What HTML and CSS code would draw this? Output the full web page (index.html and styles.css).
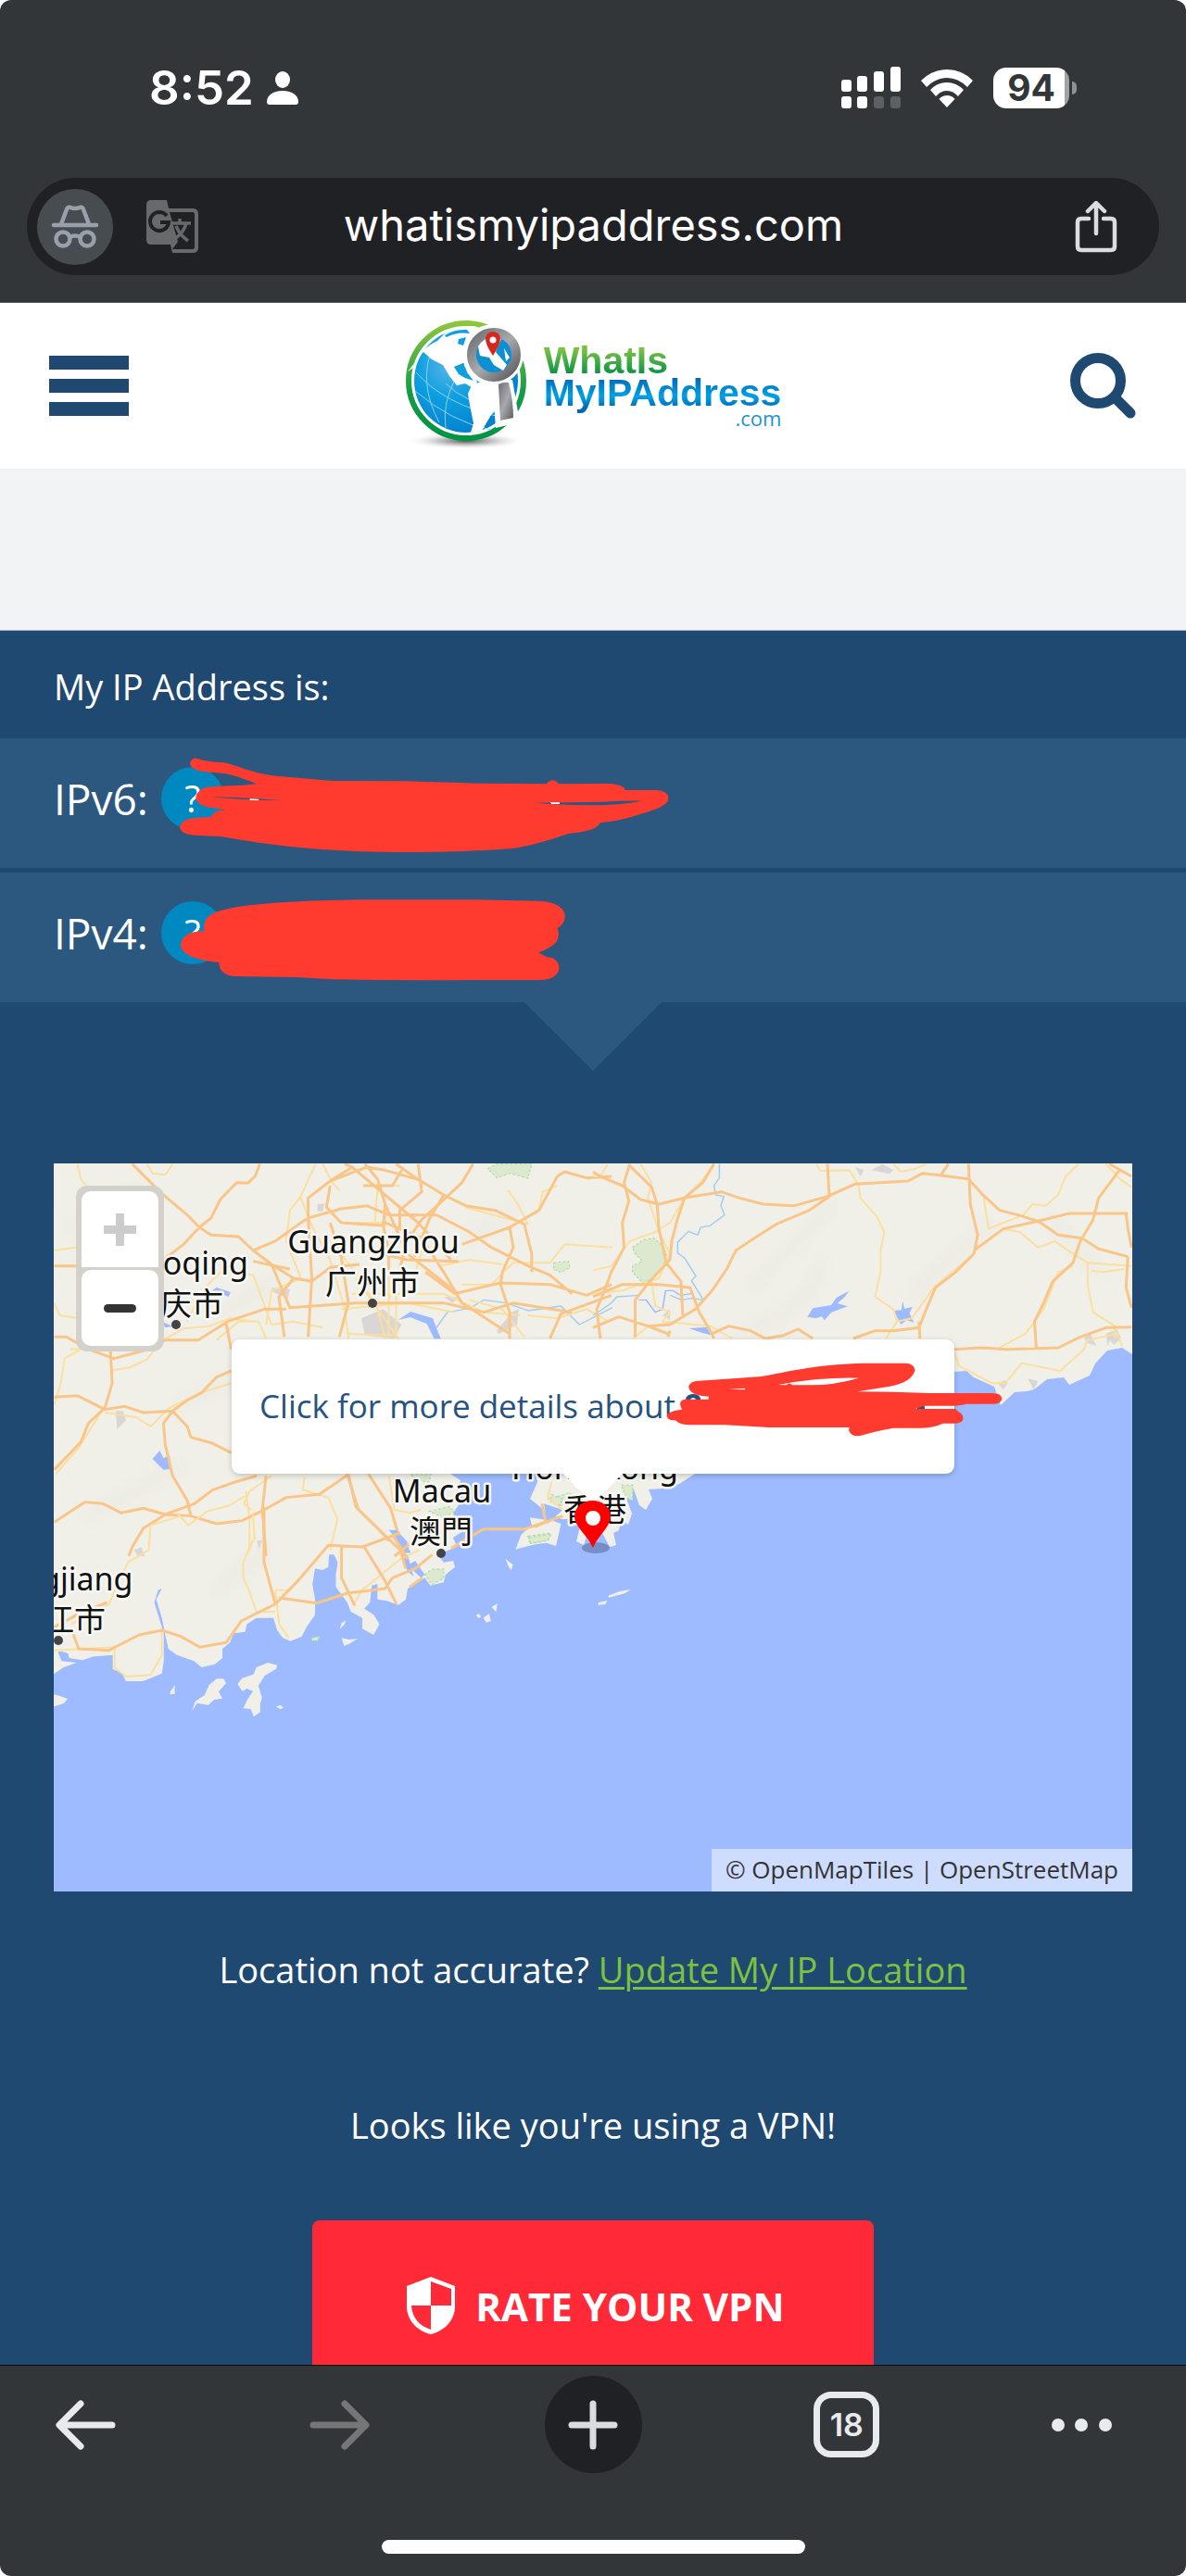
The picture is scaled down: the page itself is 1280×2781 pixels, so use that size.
FILE: index.html
```html
<!DOCTYPE html>
<html lang="en">
<head>
<meta charset="utf-8">
<meta name="viewport" content="width=device-width, initial-scale=1">
<title>What Is My IP Address</title>
<link rel="stylesheet" href="styles.css">
</head>
<body>
<div class="device">
  <div class="chrome-top">
    <div class="status">
      <div class="status-left">
        <span class="clock">8:52</span>
        <svg width="34" height="38" viewBox="0 0 34 38" fill="#fff" aria-hidden="true"><ellipse cx="17" cy="10" rx="8" ry="9"/><path d="M0 34C0 26 8 22 17 22s17 4 17 12q0 3-3 3H3q-3 0-3-3z"/></svg>
      </div>
      <div class="status-right">
        <svg width="64" height="46" viewBox="0 0 64 46" fill="#fff" aria-hidden="true"><rect y="14" width="11" height="13" rx="3"/><rect x="17" y="10" width="11" height="17" rx="3"/><rect x="35" y="5" width="11" height="22" rx="3"/><rect x="53" width="11" height="27" rx="3"/><rect y="32" width="11" height="13" rx="3"/><rect x="17" y="32" width="11" height="13" rx="3"/><g fill="#5d6062"><rect x="35" y="32" width="11" height="13" rx="3"/><rect x="53" y="32" width="11" height="13" rx="3"/></g></svg>
        <svg width="56" height="42" viewBox="0 0 56 42" fill="#fff" aria-hidden="true"><path d="M0 13Q12 1 28 1t28 12l-6 7Q40 10 28 10T6 20zM10 23q8-8 18-8t18 8l-6 7q-5-6-12-6t-12 6zM19.500 33q3-4 8.500-4t8.500 4L28 42z"/></svg>
        <div class="battery"><span class="battery-body">94</span><span class="battery-nub"></span></div>
      </div>
    </div>
    <div class="address">
      <button class="incognito" aria-label="Incognito"><svg width="52" height="48" viewBox="0 0 52 48" fill="none" stroke="#9aa0ab" stroke-width="4.500" stroke-linecap="round" stroke-linejoin="round" aria-hidden="true"><path d="M3 22h46M11 21l6-16q1-3 4-2 5 2 10 0 3-1 4 2l6 16"/><circle cx="13" cy="37" r="7.500"/><circle cx="39" cy="37" r="7.500"/><path d="M20 35q6-3 12 0"/></svg></button>
      <button class="translate" aria-label="Translate"><svg width="56" height="58" viewBox="0 0 56 58" aria-hidden="true"><path fill="#68696b" d="M5 0h17l2 9h26q6 0 6 6v36q0 6-6 6H28l-2-9H5q-5 0-5-5V5q0-5 5-5zM25 13l9 32-6 8h22q2 0 2-2V15q0-2-2-2z"/><path fill="none" stroke="#202124" stroke-width="4" d="M22 17a10 10 0 1 0 2 7h-9"/><path fill="none" stroke="#68696b" stroke-width="3.500" d="M28 25h20M36 20v5M43 25q-3 11-13 17M32 28q4 10 13 16"/></svg></button>
      <input class="url" type="text" value="whatismyipaddress.com" aria-label="Address">
      <button class="share" aria-label="Share"><svg width="46" height="56" viewBox="0 0 46 56" fill="none" stroke="#dadce0" stroke-width="4.500" stroke-linecap="round" stroke-linejoin="round" aria-hidden="true"><path d="M15 19H7q-4 0-4 4v26q0 4 4 4h32q4 0 4-4V23q0-4-4-4h-8M23 35V4M14 11l9-9 9 9"/></svg></button>
    </div>
  </div>

  <main class="page">
    <header class="site-header">
      <button class="menu" aria-label="Menu"><span></span><span></span><span></span></button>
      <a class="logo" href="#">
        <svg class="globe" width="144" height="146" viewBox="0 0 144 146" aria-hidden="true">
          <defs>
            <linearGradient id="ring" x2="0" y2="1"><stop stop-color="#8cc63f"/><stop offset=".6" stop-color="#169b48"/><stop offset="1" stop-color="#009444"/></linearGradient>
            <radialGradient id="sea" cx=".35" cy=".35" r=".8"><stop stop-color="#5cb5e8"/><stop offset=".4" stop-color="#0d9fe0"/><stop offset="1" stop-color="#0077c8"/></radialGradient>
            <linearGradient id="steel" x2="1" y2="1"><stop stop-color="#6d6e71"/><stop offset=".5" stop-color="#a7a9ac"/><stop offset="1" stop-color="#58595b"/></linearGradient>
            <radialGradient id="shade"><stop stop-color="#555"/><stop offset=".5" stop-color="#999" stop-opacity=".5"/><stop offset="1" stop-color="#fff" stop-opacity="0"/></radialGradient>
          </defs>
          <ellipse cx="66" cy="132" rx="64" ry="9" fill="url(#shade)"/>
          <circle cx="66" cy="67" r="62" fill="#fff" stroke="url(#ring)" stroke-width="6"/>
          <circle cx="66" cy="67" r="56" fill="url(#sea)"/>
          <path fill="none" stroke="#8fd0f2" stroke-width="1" d="M30 30Q14 70 37 112M56 62Q40 90 44 118M12 58q30 34 90 48M11 78q40 34 82 42M44 70q20 20 62 30"/>
          <path fill="#fff" d="M15 42q6-12 20-18l8-8q16-8 32-8l16 6-3 24-10 14-8 6 8 10-3 8-10-6-9 2-8-10-7-12-12-6-9-8-4 4-8 14-5 3zM72 72l10-4 20 0 6 12-1 10-14 14-10 17-12 2 3-10-4-20-2-12z"/>
          <path fill="#0d9fe0" d="M43 18q10-7 24-6l3 4q-14-2-25 4zM58 22l8-2-3 9-6-2zM53 52l12-5 2 11 7 9-9-3-7-4z"/>
          <path fill="#fff" d="M94 66h22l8 46-26 6z"/>
          <circle cx="95" cy="39" r="33" fill="#fff"/>
          <circle cx="96" cy="39" r="24" fill="#0d8fd4" stroke="url(#steel)" stroke-width="10"/>
          <path fill="#fff" d="M79 30q6-10 17-10l8 2-6 14 12 14-4 6-10-6-5-8-10-2zM107 32l6 10-4 4z"/>
          <path fill="url(#steel)" d="M101 71q5-3 11-2 5 20 5 38l-14 3z"/>
          <path fill="#d7261e" d="M95 40q-8-12-8-18a8 8 0 0 1 16 0q0 6-8 18z"/><circle cx="95" cy="23" r="3.500" fill="#fff"/>
        </svg>
        <span class="logo-text"><span class="logo-what">WhatIs</span><span class="logo-my">MyIPAddress</span><span class="logo-com">.com</span></span>
      </a>
      <button class="search" aria-label="Search"><svg width="72" height="72" viewBox="0 0 72 72" fill="none" stroke="#1f4971" stroke-linecap="round" aria-hidden="true"><circle cx="30" cy="30" r="24.500" stroke-width="11"/><path stroke-width="11" d="M50 50l15 15"/></svg></button>
    </header>
    <div class="ad-slot"></div>

    <section class="ip">
      <h1 class="ip-title">My IP Address is:</h1>
      <div class="ip-row">
        <span>IPv6:</span><button class="help" aria-label="About IPv6">?</button>
        <svg class="scribble" width="760" height="140" viewBox="0 0 760 140" aria-hidden="true"><g transform="scale(.4847 .3333) translate(0 -351)" fill="#ff3b30"><path d="M434 415Q460 428 500 430C540 445 560 465 620 474L740 489 900 490 1060 497 1217 499Q1231 474 1244 499L1360 498Q1390 502 1393 519L1465 519Q1490 525 1488 548C1485 575 1440 590 1400 608Q1370 620 1337 625C1325 652 1295 655 1265 660 1215 685 1180 700 1140 708Q1030 720 880 720 720 720 580 690L490 669 430 665Q400 660 401 638 402 612 440 608L470 606Q475 585 502 583L460 574Q436 562 436 542 440 510 475 507L540 503 572 499C545 485 520 468 495 464L450 459Q425 450 423 434 424 420 434 415z"/><path fill="#2c587f" d="M468 541Q540 542 630 553 550 552 468 541zM1190 560L1340 557Q1400 552 1430 554 1380 568 1310 568 1240 566 1190 560z"/><path fill="#fff" d="M556 547l20 1v4l-20-1zM1225 559h21v5h-18z"/></g></svg>
      </div>
      <div class="ip-row">
        <span>IPv4:</span><button class="help" aria-label="About IPv4">?</button>
        <svg class="scribble" width="760" height="140" viewBox="0 0 760 140" aria-hidden="true"><g transform="scale(.4847 .3333) translate(0 -786)" fill="#ff3b30"><path d="M485 912C540 885 680 876 820 874H1060L1200 878C1240 880 1260 905 1258 930Q1256 955 1241 966 1248 990 1238 1012 1228 1030 1199 1045L1218 1060Q1244 1062 1245 1098 1240 1134 1200 1134H1060Q900 1136 740 1132L660 1125 520 1122Q487 1115 488 1077C440 1070 405 1055 402 1020 405 985 430 975 455 976Q448 930 485 912z"/></g></svg>
      </div>
      <div class="pointer"></div>

      <div class="map">
        <svg class="map-canvas" viewBox="58 1256 1164 786" role="img" aria-label="Map of Hong Kong and Guangdong">
          <defs><filter id="soft"><feGaussianBlur stdDeviation="9"/></filter></defs>
          <rect x="58" y="1256" width="1164" height="786" fill="#9dbbfe"/>
          <g fill="#f1f0e8">
            <path d="M58 1256H1222V1462L1211 1455 1195 1458 1182 1472 1176 1485 1154 1495 1148 1487 1130 1489 1116 1500 1108 1502 1095 1503 1080 1517 1073 1497 1051 1487 1043 1480 1029 1481 1000 1540H58z"/>
            <path d="M570 1540H900L760 1585 750 1591 733 1602 715 1607 700 1608 704 1618 697 1630 690 1625 684 1608 674 1612 682 1634 678 1646 670 1640 668 1652 662 1655 665 1668 658 1670 650 1655 636 1650 630 1668 622 1664 628 1640 606 1640 592 1634 572 1618 580 1600z"/>
            <g transform="translate(40 1560) scale(.4082 .3333)"><path d="M44-120H1095V95L1120 115 1110 150 1120 185 1100 220 1105 240 1150 260 1100 300 1110 330 1060 355 1075 380 1100 375 1105 395 1080 420 1075 445 1040 455 1025 430 980 465 975 500 955 518 925 505 900 500 900 450 885 455 880 510 865 530 890 550 905 580 890 615 860 595 860 560 830 540 820 510 790 460 790 420 795 380 785 355 772 355 770 395 755 405 735 400 728 450 735 500 735 550 712 590 700 620 670 635 650 625 635 600 625 560 580 560 555 580 550 605 520 610 510 640 490 660 490 690 470 710 435 720 415 700 370 680 347 660 340 620 330 560 315 500 330 465 320 470 310 510 325 570 335 610 335 700 330 740 280 765 235 765 225 740 200 725 200 680 150 685 120 697 85 690 82 675 65 668 55 670 65 700 105 705 70 720 44 742z"/>
            <path d="M44 808l15 4 22 10-10 14-27 12zM410 862l8-32 25-20 12-33 20-20 18 0 7 14-20 28 10 22-22 4-15 17-30-6zM530 775l12-20 30-12 8-23 30-15 25 8-3 12-30 22-17 33 10 38-5 20 0 27-17 15-8-25-20-2 12-30 14-26-16-8-12 8zM352 800l12-22v28l-12 2zM632 848l10-6 10 8-8 6zM800 597l5-20 12-10-5 15zM805 625l20 5 22-2-20 15-15 8zM1160 552l8-6 6 10-6 5zM1180 560l15-14 5 24-12 5zM1202 525l15-12-3 28zM1238 368l20 20-4 18-8-14zM1485 510l22-6-4 12-20 2zM1510 488l30-14 30-6-15 12-43 14zM1265 338l15-48 28-30-5-25 60 10 22 10-5 30-8 42-25-10-30 5-35 10z"/></g>
          </g>
          <g filter="url(#soft)" fill="none" stroke="#e6e5de" stroke-width="11" opacity=".6"><path d="M70 1330l90-50M90 1640l110-60M560 1300l-60 40M780 1460l90-60 20-40M980 1400l90-80M900 1300l-90 90M1130 1310l60 70M270 1480l-80 40M230 1720l60-50M300 1380l-60 40"/></g>

          <!-- roads west of the estuary and around Guangzhou -->
          <g transform="translate(40 1240) scale(.3954 .3333)">
            <g fill="#dce9cf" stroke="#a5dba0" stroke-width="3" stroke-dasharray="7 6"><path d="M1230 65l25-15h95l-10 46-50-16-35 15zM1410 370l40-5 5 20-25 16-20-10zM1070 1175l55-15 15 15-30 20zM1020 1055h55l-5 25-35-5zM1395 1135l60-20 20 30-50 12zM1340 1255l60-10-5 25-50 10z"/></g>
            <g fill="#d9d6d6"><path d="M215 850l20 0 8 30-25 30zM640 450l50 5-5 30-40-20zM765 180l20-2-5 25-15 0zM885 550l60-30 50 50-20 45-80-10zM1110 480l40 0-15 20zM1255 590l40-60 20-10-5 50-50 30zM1010 210l30 0-10 15zM265 1300l20-8 10 28-20 0zM600 1270l15 0-10 30z"/></g>
            <g fill="#9dbbfe"><path d="M315 1005l20-27 10 25 17-10 3 45-20 2zM985 555l35-27 60 22 22 66h-18l-20-48-45-22zM470 465l20-15 38 15-5 15-25-12zM965 1235l40 35 15 40-15 0zM340 560l30 15-20 5z"/></g>
            <g class="water-line"><path d="M1090 580l30-50 60-12 40-28 60 10 60 25 90-15 50 60 50-30 40-25M160 500l-20-20"/></g>
            <g class="road-minor"><path d="M110 50l10 50 28 40M300 50l15 30 35 5 20-35M760 50l-40 105-30 45-10 100 40 120-80 40-15 110M780 50l25 60 20 25M870 240l80 0 5-50M800 300l70 100 60 120 20 95M720 160l30 90 50 110 40 160 10 95M990 120l-60 0-8 120M1170 190l60 20 110 35-30-70-25-40M1050 330l-30 130M1000 300l-10 100-30 90M860 470l250 0 110 60 100 10M830 520l180-20 130 30M845 600l130 5M870 420l120 200M960 400v215M980 400v215M640 570l60-10 80 20M47 330l60-10M47 500l15 40 55 10M90 650l110-5 100 0M200 720l55-12 45-25 40-60 60-40 70-8 55-25 70 10M120 650l-45 30-10 80-18 70M530 760l-80 30-90 50-50 60-40-30-85-15M180 845l-70 130-60 80M640 1060l-60 50-15 40 20 20M570 1110l10 90 0 90-10 30M730 1065l-5 40 70 25 25 70-20 100M490 620l60-60 55 0 20 55M1160 440l80 0 60-70 100 0 40-60 130 10M1370 200l10-60 40-20M1100 380l80-20 90 15M1340 540l80 10 80-30 60 40M1180 490l90 30 60 90M410 560l40-100 60-70 80 20 50 160"/></g>
            <g class="road"><path d="M260 50l80 95 70 70 33 40 32 25 75 5 40 45 50 45 60 45 50 10 50-45 80-10M443 255l32-30 25-60 45-55 30 2 20-22 13-40M443 255l-43 55-55 50M47 380h70M590 330l60-30 70-60 20-15 90-30 70-10 60 30h130l90 55 60 50 100 60 60 30 60 60M740 225v-65l60-55 60-45-20-10M800 105l100-45 50 10 90 30 70 50 60 35 80 15 80 45 20 95 0 60M895 50l35 50 20 80-5 70 15 80 0 80M690 390l-100-25M1040 50l10 90-60 60 0 60M1190 50l-30 60-45 50-65 70-40 70-20 90M1160 310l130-55 80-55 50-110 20-15 60 20 68-5M1290 255l10 65-30 80-5 40 25 90 0 85M1060 400l80 70 125-35 135 5 100 35 68-35M1400 615l30-80 138-60M47 610h33l60 40 70 30 80-25 60-35 90 0 80-60 100-40 60 0M515 560l15 90M200 645l5 115-20 80-45 50-20 60-73 90M47 805l63-5 75 45 55-10 50 20 80-5 40-35 40-25 40-50 40-20M370 850l-25 40 5 70 20 100 40 80 10 50M370 850l40 50 10 35 60 20 50 30M47 1210l83-65 50 5 50 30 60-15 60 20 70 5 70 25 70-10 60-35 60-40 90-10 50-40 30-25M350 1185l-60 45-30 60-10 30M350 1185l80-35 50-45 60-25 60-20M625 1060l-10 110 10 150M850 1055l20 105 60 70 30 40M905 1055l60 110 20 80M800 240l30 110 20 150-25 110M740 230l10 190-10 190M700 420l-40 60 15 130M640 375l50 140 180-15 240 0 110 30 80-30 160 30M900 330l110 30 140 5M950 240l100 50 60 110 50 100 130 100M800 120l-10 70 40 50 120 10M1110 150l-40 80-40 120M1040 100l-60-50M1000 60l-30 60-80 0M860 60l60 60 120 120 90 120M950 180l60 160 140 130"/></g>
          </g>
          <!-- the eastern half -->
          <g transform="translate(640 1240) scale(.3954 .3333)">
            <path fill="#dce9cf" stroke="#a5dba0" stroke-width="3" stroke-dasharray="7 6" d="M108 320l30-25 28-5 20 20 15 30-10 45-25 35-30 16-28-36 0-20 27-15-20-25z"/>
            <path fill="#d9d6d6" d="M715 60l25 10-10 20zM760 70l30-20 30 20-10 12zM1340 615l15-20 20 45-25-10zM1400 600l30-15 12 30-20 20-12-15-5 20zM1105 760l15 20 12-20-8-10zM1187 745l28 8-12 28zM190 540l20-20 0 35z"/>
            <path fill="#9dbbfe" d="M585 545l15-28 50-10 15-25 34-21-12 20-20 20 28 10-45 20-18 25-8-12-15 6zM820 525l22-2 3-30 5 25 22-5-8 20 12 30-20-8-15 15zM262 582l50-4 10 26-25-8z"/>
            <g class="water-line"><path d="M345 50v45l-15 25 5 30 22 5-8 30 10 30-40 35-25 5-8 25-25-12-30 35 0 35 18 15 32 60-12 15 32 62-30-5-30 5-30-15M0 540l20-15 30-25 15-20 60-5"/><path stroke="#9dbbfe" d="M125 490l20 0 25 40 20-10 8-60 20 0 20 15 30-5"/></g>
            <g class="road-minor"><path d="M610 50l10 22 80-2 25 50 5 40 45 60 20 50-10 60 0 70-15 80 50 40 10 40-30 55M1025 100l40 50 15 110 30-15 65-30 25-35 35 5 35-35 20-60 35-40M985 660l15 45 90 55 35 0 45-65 105 25 65-70 10-30 80-20 15 40M1120 260l45 10 50 50 45-20 50 40 40 30 120 10M1350 370v70l15 90 60 45 0 40M1310 380l-40 20-40 120-50 80-70 45M0 395l50-15 50-80 70-30 40-30 40-80 50-60 30-50M130 50l30 60-10 50 30 110 30 70-30 80-100 40-80 10M160 430l10 80 40 20-20 30 20 10-60 5-40 40M200 560l120 15 60 40M820 50l20 25 40-10 30-15M1400 50l40 50 30 25M830 560l40-10 60-100 100-100M1360 395l30 5 60-10M40 50l-20 40-20 0"/></g>
            <g class="road"><path d="M0 75l20 15 60 30 50 45 50 15 70-20 100-20 50 20 65 20 85 5 90-30 75-40 145-10 40-25 125 18 35 47 50 55 50 15 55 20 55 45 65 10 45 35 80 25M100 50l-15 60 13 60-18 70 5 80-35 80-25 80-15 40 10 95M330 50l-30 60-50 50-20 70-15 70-5 60-55 70-40 60 0 120M100 55l60 70 15 55 5 80 20 110 40 60 5 110M640 50l5 105-55 45-90 45-60 45-50 40-25 60-40 70-45 60-70 50-60 5-80-30-70 35M0 480l80-40 100 0 85 10 25 80 35 70 5 15M325 600l45-25 60 15 40 25 50-10 40-20 40 30M1025 50l5 130 20 100-10 60-50 60-55 50-25 70-20 60-70 10-50 0-60 25M890 560l2 55M1040 330l80-70 95-25 85-25h160M1440 65l-60 95-15 70-35 70-20 70-55 60-25 70-25 60 5 85M985 650l75-5 70 5 140-5 60-35 70-30 70-2M1455 210l5 50 10 60M1460 350l-5 100 15 65M210 590l-5 20M150 575l55 25M1410 50l60 40M970 50l-20 35"/></g>
          </g>
          <!-- the southern coast -->
          <g transform="translate(40 1560) scale(.4082 .3333)">
            <path fill="#9dbbfe" d="M930 275l20 0 30 40-10 20zM960 350l20 5 15 70-15-15zM980 390l20-15 25 45-10 10zM1340 190l50 20-40 45z"/>
            <path fill="#dce9cf" stroke="#a5dba0" stroke-width="3" stroke-dasharray="7 6" d="M1025 420l20-18h30l0 30-30 20zM1300 300l60-12-10 20-45 10zM1360 160l30 15-10 20-22-10zM1545 130l30 0 0 50-18-10zM725 625l22-5-5 14-15 0z"/>
            <g class="road-minor"><path d="M570 220l5 80-30 80 0 50 15 40 20 70 50 0M630 470l10 110 25 45M205 660l0 60 30 30 65-5 30-65 0-80M45 665l160-10M850 480l110-110 50-30M380 230l-80 30-5 80-55 40-50 135-100 65M370 220l30 40 50-45 60-20 40-30M630 470h35l110-150M930 100l15 110 40 10 30-10M835 520l30-60M1360 120l-10 50 40 40"/></g>
            <g class="road"><path d="M95 610l15 50 80 5 80-50 60-15 50 20 50 35 70-15 40-70 90-55 60-75 80-115 90 5 100-45M630 515l-30-135 0-180M640 495l100 17 80-32 100-15 20-35 60-30 45-45M805 330v100l35 90M865 330l55 110 30 75M1095 335l85-63h110l100-42M820 95l30 115 110 130 15 60M940 290l40 80M945 360l60-60M985 460l35-30M45 590l60-40 80-40M1335 190l10 60-30 15"/></g>
          </g>
          <g class="city">
            <text x="403" y="1353">Guangzhou</text><text x="402" y="1397">广州市</text>
            <text x="192" y="1376">Zhaoqing</text><text x="190" y="1420">肇庆市</text>
            <text x="642" y="1597">Hong Kong</text><text x="642" y="1642">香港</text>
            <text x="477" y="1622">Macau</text><text x="476" y="1666">澳門</text>
            <text x="65" y="1717">Yangjiang</text><text x="63" y="1761">阳江市</text>
          </g>
          <g fill="#444"><circle cx="402" cy="1407" r="5"/><circle cx="190" cy="1430" r="5"/><circle cx="476" cy="1677" r="5"/><circle cx="63" cy="1771" r="5"/></g>
          <ellipse cx="643" cy="1671" rx="15" ry="6" fill="#3b4a6b" opacity=".4"/>
        </svg>
        <div class="zoom"><button class="zoom-in" aria-label="Zoom in" disabled></button><button class="zoom-out" aria-label="Zoom out"></button></div>
        <a class="popup" href="#">Click for more details about <b>8</b></a>
        <svg class="map-canvas map-over" viewBox="58 1256 1164 786" aria-hidden="true">
          <path fill="#f00" d="M640 1671C634 1657 620 1648 620 1637a19.500 17 0 0 1 39 0c0 11-13 20-19 34z"/><circle cx="640" cy="1639" r="8" fill="#fff"/>
          <g transform="translate(640 1240) scale(.3954 .3333)"><path fill="#26527f" d="M885 838q5-8 20-6v12h-20z"/><path fill="#ff3b30" d="M290 752L460 738C560 715 640 695 760 695H855Q878 698 879 718 870 758 810 770L722 787 820 788 920 792H1090Q1115 792 1116 810 1114 826 1095 827H1018Q1000 834 965 833H905L880 843H990Q994 850 1000 854 1012 862 1010 878 1005 890 985 890H955Q930 905 890 905H820Q770 915 730 930 705 935 698 912L700 903H480L360 895H260Q235 893 225 880 202 882 201 865 205 850 243 845 230 818 250 812H315L316 803Q262 800 261 770 265 752 290 752z"/><path fill="#fff" d="M505 765Q620 740 726 743 650 768 590 766H545L535 760 528 766zM370 779L415 776V781z"/></g>
        </svg>
        <p class="attribution">© <a href="#">OpenMapTiles</a> | <a href="#">OpenStreetMap</a></p>
      </div>

      <p class="note">Location not accurate? <a href="#">Update My IP Location</a></p>
      <p class="note vpn">Looks like you're using a VPN!</p>
      <button class="rate"><svg width="52" height="62" viewBox="0 0 52 62" aria-hidden="true"><path fill="#fff" fill-rule="evenodd" d="M26 0l26 10v22C52 46 42 58 26 62 10 58 0 46 0 32V10zM26 5v26h22V13zM26 31H5C6 45 14 53 26 57z"/></svg>RATE YOUR VPN</button>
    </section>
  </main>

  <footer class="chrome-bottom">
    <nav class="tools">
      <button class="tool" aria-label="Back"><svg width="65" height="54" viewBox="0 0 65 54" fill="none" stroke="#e8eaed" stroke-width="7" stroke-linecap="round" stroke-linejoin="round"><path d="M61 27H5M27 4L4 27l23 23"/></svg></button>
      <button class="tool" aria-label="Forward"><svg width="65" height="54" viewBox="0 0 65 54" fill="none" stroke="#757678" stroke-width="7" stroke-linecap="round" stroke-linejoin="round"><path d="M4 27h56M38 4l23 23-23 23"/></svg></button>
      <button class="tool new-tab" aria-label="New tab"><svg width="54" height="54" viewBox="0 0 54 54" stroke="#dadce0" stroke-width="7" stroke-linecap="round"><path d="M4 27h46M27 4v46"/></svg></button>
      <button class="tool" aria-label="Tabs"><span class="tabs">18</span></button>
      <button class="tool more" aria-label="More"><svg width="66" height="14" viewBox="0 0 66 14" fill="#e8eaed"><circle cx="7" cy="7" r="7"/><circle cx="32" cy="7" r="7"/><circle cx="58" cy="7" r="7"/></svg></button>
    </nav>
    <div class="home-bar"></div>
  </footer>
</div>
</body>
</html>
```
FILE: styles.css
```css
* { box-sizing: border-box; }
html, body { height: 100%; margin: 0; }
body { background: #fff; font-family: "Open Sans", sans-serif; color: #fff; }
button { border: 0; padding: 0; background: none; color: inherit; font: inherit; }
svg { display: block; }
p, h1 { margin: 0; font-weight: 400; }

.device { display: flex; flex-direction: column; height: 100%; overflow: hidden; border-radius: 12px; background: #323639; }

/* browser top */
.chrome-top { padding: 60px 29px 29px; border-bottom: 1px solid #555; font-family: Inter, sans-serif; }
.status { display: flex; justify-content: space-between; align-items: center; height: 70px; padding: 0 89px 0 132px; }
.status-left, .status-right { display: flex; align-items: center; }
.status-left { gap: 14px; }
.clock { font-size: 51px; font-weight: 600; line-height: 70px; }
.status-right { gap: 22px; height: 68px; }
.battery { display: flex; align-items: center; gap: 3px; }
.battery-body { width: 82px; height: 44px; border-radius: 14px; background: linear-gradient(90deg, #fff 77px, #a0a2a4 77px); color: #323639; font-size: 39px; font-weight: 700; line-height: 44px; text-align: center; }
.battery-nub { width: 5px; height: 14px; border-radius: 0 5px 5px 0; background: #8f9193; }
.address { display: flex; align-items: center; height: 105px; margin-top: 62px; padding: 0 45px 0 11px; border-radius: 53px; background: #202124; }
.incognito { display: flex; align-items: center; justify-content: center; width: 82px; height: 82px; border-radius: 50%; background: #474c50; }
.translate { margin-left: 36px; }
.url { flex: 1; min-width: 0; margin: 0 93px 4px 0; padding: 0; border: 0; background: none; color: #fff; font: 47px/60px Inter, sans-serif; text-align: center; }
.share { margin-left: 0; }

/* site header */
.page { flex: 1; min-height: 0; overflow: hidden; background: #1f4971; }
.site-header { display: flex; justify-content: space-between; align-items: center; height: 179px; padding: 0 53px; background: #fff; }
.menu { display: flex; flex-direction: column; gap: 10px; width: 86px; }
.menu span { height: 15px; background: #1f4971; }
.logo { display: flex; align-items: center; gap: 6px; margin-right: 14px; text-decoration: none; }
.logo-text { display: flex; flex-direction: column; font-family: "Liberation Sans", Arial, sans-serif; font-size: 41px; font-weight: 700; line-height: 35px; }
.logo-what, .logo-my { color: transparent; background-clip: text; -webkit-background-clip: text; }
.logo-what { background-image: linear-gradient(#7ac143 15%, #0c9347 90%); }
.logo-my { height: 42px; background-image: linear-gradient(#0067b3, #00a1e4 50%, #0067b3 80%); }
.logo-com { align-self: flex-end; margin-top: -8px; color: #1e93d6; font: 22px/20px "Open Sans", sans-serif; }
.ad-slot { height: 175px; background: #f1f3f5; border-bottom: 1px solid #9fb2c4; }

/* address list */
.ip-title { padding: 30px 58px 26px; font-size: 38px; line-height: 60px; }
.ip-row { position: relative; display: flex; align-items: center; gap: 14px; height: 140px; padding: 0 58px 10px; background: #2c587f; font-size: 46px; line-height: 60px; }
.ip-row + .ip-row { margin-top: 5px; }
.help { width: 68px; height: 68px; border-radius: 50%; background: #0088c0; font-size: 40px; line-height: 68px; }
.scribble { position: absolute; left: 0; top: 0; }
.pointer { width: 148px; height: 74px; margin: 0 auto 100px; background: #2c587f; clip-path: polygon(0 0, 100% 0, 50% 100%); }

/* map */
.map { position: relative; margin: 0 58px; overflow: hidden; }
.map-canvas { width: 100%; height: auto; }
.map-over { position: absolute; left: 0; top: 0; pointer-events: none; }
.road, .road-minor, .water-line { fill: none; stroke-linejoin: round; }
.road path { stroke: #f9c588; stroke-width: 3; vector-effect: non-scaling-stroke; }
.road-minor path { stroke: #fbdf9f; stroke-width: 2; vector-effect: non-scaling-stroke; }
.water-line { stroke: #a3ccf2; stroke-width: 4; }
.city { font: 34px "Noto Sans", "Noto Sans CJK SC", sans-serif; text-anchor: middle; fill: #111; stroke: #f8f8f4; stroke-width: 5px; stroke-linejoin: round; paint-order: stroke; }
.zoom { position: absolute; left: 24px; top: 24px; display: flex; flex-direction: column; gap: 3px; width: 95px; padding: 6px; border-radius: 12px; background: #d2d1cb; }
.zoom button { height: 82px; border-radius: 10px; background: #fff; }
.zoom button::before { content: ""; display: block; width: 35px; height: 9px; margin: 0 auto; border-radius: 5px; background: #333; }
.zoom .zoom-in { border-radius: 10px 10px 0 0; }
.zoom .zoom-in::before { height: 35px; border-radius: 0; background: linear-gradient(#ccc, #ccc) 50% / 35px 9px no-repeat, linear-gradient(#ccc, #ccc) 50% / 9px 35px no-repeat; }
.popup { position: absolute; left: 50%; top: 190px; width: 780px; height: 145px; margin-left: -390px; padding: 0 30px; border-radius: 9px; background: #fff; box-shadow: 0 2px 6px rgba(0, 0, 0, .2); color: #26527f; font-size: 35px; line-height: 143px; text-decoration: none; white-space: nowrap; }
.popup::after { content: ""; position: absolute; left: 50%; top: 100%; width: 64px; height: 32px; margin-left: -32px; background: #fff; clip-path: polygon(0 0, 100% 0, 50% 100%); }
.attribution { position: absolute; right: 0; bottom: 0; padding: 0 15px 2px; background: rgba(255, 255, 255, .5); color: #333; font-size: 26px; line-height: 44px; }
.attribution a { color: inherit; text-decoration: none; }

.note { margin-top: 54px; font-size: 38px; line-height: 60px; text-align: center; }
.note a { color: #7cc13f; text-decoration-thickness: 3px; text-underline-offset: 4px; }
.vpn { margin-top: 108px; }
.rate { display: flex; align-items: center; justify-content: center; gap: 22px; width: 606px; height: 186px; margin: 73px auto 0; padding: 0 0 2px 6px; border-radius: 8px; background: #ff2938; font-size: 42px; font-weight: 700; }

/* browser bottom */
.chrome-bottom { border-top: 1px solid #0b0c0d; padding: 11px 40px 24px; font-family: Inter, sans-serif; }
.tools { display: flex; justify-content: space-between; }
.tool { display: flex; align-items: center; justify-content: center; width: 105px; height: 105px; border-radius: 50%; }
.new-tab { background: #202124; }
.more { justify-content: flex-start; }
.tabs { width: 71px; height: 71px; border: 7px solid #e8eaed; border-radius: 19px; color: #e8eaed; font-size: 34px; font-weight: 600; line-height: 58px; text-align: center; }
.home-bar { width: 457px; height: 15px; margin: 72px auto 0; border-radius: 8px; background: #fdfdfd; }
```
